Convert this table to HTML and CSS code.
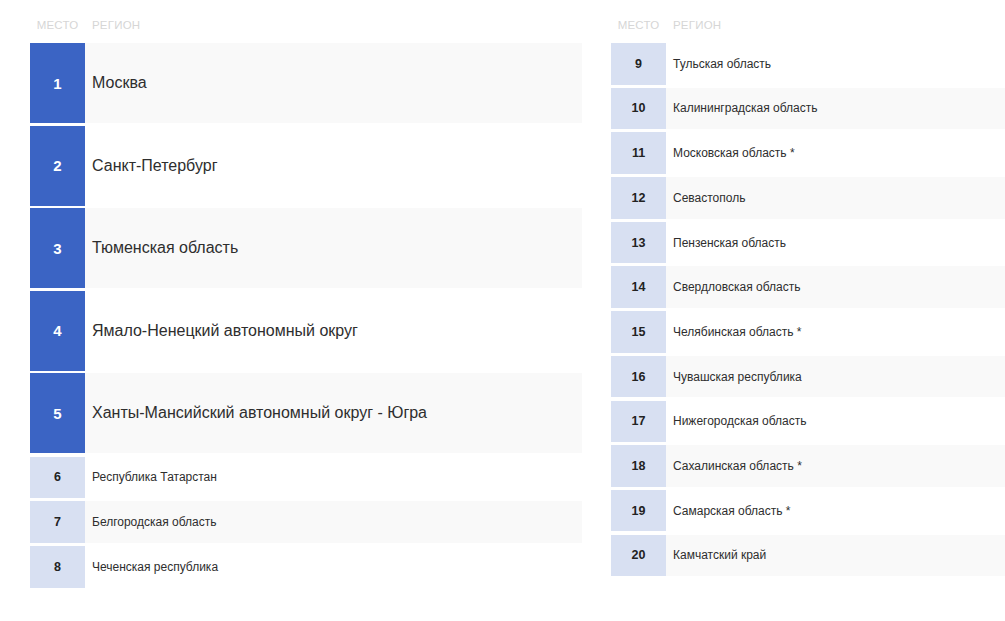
FILE: index.html
```html
<!DOCTYPE html>
<html lang="ru">
<head>
<meta charset="utf-8">
<link rel="stylesheet" href="styles.css">
</head>
<body>
<div class="page">
  <div class="col col-left">
    <div class="head"><span class="h-place">МЕСТО</span><span class="h-region">РЕГИОН</span></div>
    <div class="rows">
      <div class="row big alt"><div class="num">1</div><div class="name">Москва</div></div>
      <div class="row big"><div class="num">2</div><div class="name">Санкт-Петербург</div></div>
      <div class="row big alt"><div class="num">3</div><div class="name">Тюменская область</div></div>
      <div class="row big"><div class="num">4</div><div class="name">Ямало-Ненецкий автономный округ</div></div>
      <div class="row big alt"><div class="num">5</div><div class="name">Ханты-Мансийский автономный округ - Югра</div></div>
      <div class="row small"><div class="num">6</div><div class="name">Республика Татарстан</div></div>
      <div class="row small alt"><div class="num">7</div><div class="name">Белгородская область</div></div>
      <div class="row small"><div class="num">8</div><div class="name">Чеченская республика</div></div>
    </div>
  </div>
  <div class="col col-right">
    <div class="head"><span class="h-place">МЕСТО</span><span class="h-region">РЕГИОН</span></div>
    <div class="rows">
      <div class="row small"><div class="num">9</div><div class="name">Тульская область</div></div>
      <div class="row small alt"><div class="num">10</div><div class="name">Калининградская область</div></div>
      <div class="row small"><div class="num">11</div><div class="name">Московская область *</div></div>
      <div class="row small alt"><div class="num">12</div><div class="name">Севастополь</div></div>
      <div class="row small"><div class="num">13</div><div class="name">Пензенская область</div></div>
      <div class="row small alt"><div class="num">14</div><div class="name">Свердловская область</div></div>
      <div class="row small"><div class="num">15</div><div class="name">Челябинская область *</div></div>
      <div class="row small alt"><div class="num">16</div><div class="name">Чувашская республика</div></div>
      <div class="row small"><div class="num">17</div><div class="name">Нижегородская область</div></div>
      <div class="row small alt"><div class="num">18</div><div class="name">Сахалинская область *</div></div>
      <div class="row small"><div class="num">19</div><div class="name">Самарская область *</div></div>
      <div class="row small alt"><div class="num">20</div><div class="name">Камчатский край</div></div>
    </div>
  </div>
</div>
</body>
</html>
```

FILE: styles.css
```css
* { box-sizing: border-box; }
html, body { margin: 0; padding: 0; background: #fff; }
body {
  font-family: "Liberation Sans", Arial, sans-serif;
  color: #2e2e2e;
  overflow: hidden;
}
.page {
  display: flex;
  gap: 29px;
  padding-left: 30px;
  width: 1005px;
}
.col-left { width: 552px; flex: none; }
.col-right { width: 394px; flex: none; }
.head {
  display: flex;
  align-items: center;
  height: 43px;
  padding-top: 7px;
  font-size: 11.5px;
  color: #d6d6d6;
  letter-spacing: 0.2px;
}
.h-place { width: 55px; text-align: center; }
.h-region { padding-left: 7px; }
.rows { display: flex; flex-direction: column; }
.row { display: flex; align-items: stretch; }
.row.alt { background: #f9f9f9; }
.row.big { height: 80px; margin-bottom: 2.6px; }
.row.small { height: 41.6px; margin-bottom: 3.1px; }
.row.big + .row.small { margin-top: 0.6px; }
.num {
  width: 55px;
  flex: none;
  display: flex;
  align-items: center;
  justify-content: center;
  font-weight: bold;
}
.big .num { background: #3b64c4; color: #fff; font-size: 15px; }
.small .num { background: #d8e0f2; color: #222; font-size: 12.5px; }
.name {
  display: flex;
  align-items: center;
  padding-left: 7px;
}
.big .name { font-size: 16px; }
.small .name { font-size: 12px; }
```
